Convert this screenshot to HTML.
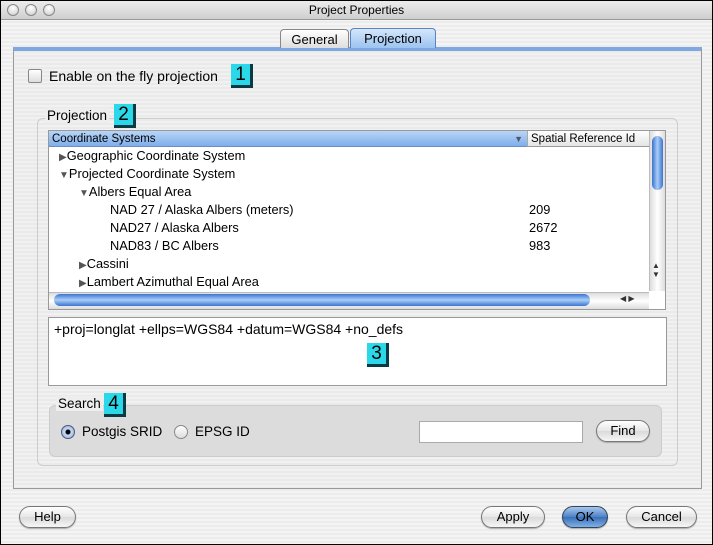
<!DOCTYPE html><html><head><style>
*{box-sizing:border-box}
body{margin:0;width:713px;height:545px;overflow:hidden;font-family:"Liberation Sans",sans-serif;font-size:12.5px;color:#000}
.win{position:absolute;left:0;top:0;width:713px;height:545px;border:1px solid #000;background:repeating-linear-gradient(#ececec 0 2px,#f4f4f4 2px 4px)}
.title{position:absolute;left:0;top:0;width:711px;height:19px;background:linear-gradient(#ececec,#cfcfcf);border-bottom:1px solid #999;text-align:center;font-size:12px;line-height:18px}
.dot{position:absolute;top:3px;width:12px;height:12px;border-radius:50%;border:1px solid #888;background:radial-gradient(circle at 50% 30%,#fff,#ccc)}
.a{position:absolute}
.tab{position:absolute;top:28px;height:19px;border:1px solid #888;border-bottom:none;border-radius:4px 4px 0 0;background:linear-gradient(#fff,#ddd);text-align:center;line-height:19px;font-size:13px}
.panel{position:absolute;left:12px;top:46px;width:689px;height:442px;border:1px solid #999;border-top:4px solid #7fa8e0;background:repeating-linear-gradient(#eaeaea 0 2px,#f1f1f1 2px 4px)}
.badge{position:absolute;width:22px;height:24px;background:#2ad8ea;border-right:3px solid #0a3a44;border-bottom:3px solid #0a3a44;font-size:19px;text-align:center;line-height:22px;transform-origin:0 0}
.grp{position:absolute;border:1px solid #ccc;border-radius:6px}
.btn{position:absolute;height:22px;border:1px solid #777;border-radius:11px;background:linear-gradient(#fff,#e6e6e6 50%,#dadada 51%,#f6f6f6);text-align:center;line-height:20px;font-size:13px;box-shadow:0 1px 1px #aaa}
.row{position:absolute;height:18px;line-height:18px;font-size:12.8px}
</style></head><body><div class="win">
<div class="title">Project Properties</div>
<div class="dot" style="left:6px"></div><div class="dot" style="left:24px"></div><div class="dot" style="left:42px"></div>
<div class="panel"></div>
<div class="tab" style="left:279px;width:69px">General</div>
<div class="tab" style="left:349px;width:86px;background:linear-gradient(#d4e6fb,#9cc3f0);border-color:#5b83c2;top:27px;height:20px">Projection</div>
<div class="a" style="left:27px;top:68px;width:14px;height:14px;border:1px solid #888;border-radius:2px;background:linear-gradient(#fff,#ddd)"></div>
<div class="a" style="left:48px;top:67px;font-size:14px">Enable on the fly projection</div>
<div class="badge" style="left:230px;top:63px">1</div>
<div class="grp" style="left:36px;top:117px;width:641px;height:348px"></div>
<div class="a" style="left:44px;top:107px;padding:0 2px;background:#eee;font-size:13.5px">Projection</div>
<div class="badge" style="left:113px;top:103px">2</div>
<div class="a" style="left:47px;top:129px;width:618px;height:180px;background:#fff;border:1px solid #999"></div>
<div class="a" style="left:48px;top:130px;width:478px;height:16px;background:linear-gradient(#b9d5f6,#7eaeea);border-bottom:1px solid #6a8fc8;font-size:11.5px;line-height:16px;padding-left:3px">Coordinate Systems<span style="position:absolute;right:4px;color:#556;font-size:9px">▼</span></div>
<div class="a" style="left:526px;top:130px;width:122px;height:16px;background:linear-gradient(#fff,#e4e4e4);border-bottom:1px solid #999;border-left:1px solid #aaa;font-size:11.5px;line-height:16px;padding-left:3px">Spatial Reference Id</div>
<div class="a" style="left:648px;top:130px;width:16px;height:160px;background:linear-gradient(90deg,#ddd,#fff,#ddd);border-left:1px solid #bbb"></div>
<div class="a" style="left:651px;top:135px;width:11px;height:54px;border-radius:6px;background:linear-gradient(90deg,#3a74d0,#a9cdf7,#3a74d0)"></div>
<div class="a" style="left:651px;top:260px;font-size:8px;color:#333">▲<br>▼</div>
<div class="row" style="left:58px;top:146px"><span style="font-size:10px;color:#555">▶</span>Geographic Coordinate System</div>
<div class="row" style="left:58px;top:164px"><span style="font-size:10px;color:#555">▼</span>Projected Coordinate System</div>
<div class="row" style="left:78px;top:182px"><span style="font-size:10px;color:#555">▼</span>Albers Equal Area</div>
<div class="row" style="left:109px;top:200px">NAD 27 / Alaska Albers (meters)</div>
<div class="row" style="left:109px;top:218px">NAD27 / Alaska Albers</div>
<div class="row" style="left:109px;top:236px">NAD83 / BC Albers</div>
<div class="row" style="left:528px;top:200px">209</div>
<div class="row" style="left:528px;top:218px">2672</div>
<div class="row" style="left:528px;top:236px">983</div>
<div class="row" style="left:78px;top:254px"><span style="font-size:10px;color:#555">▶</span>Cassini</div>
<div class="row" style="left:78px;top:272px"><span style="font-size:10px;color:#555">▶</span>Lambert Azimuthal Equal Area</div>
<div class="a" style="left:48px;top:291px;width:600px;height:17px;background:linear-gradient(#ddd,#fff,#ddd);border-top:1px solid #bbb"></div>
<div class="a" style="left:53px;top:293px;width:536px;height:12px;border-radius:6px;background:linear-gradient(#3a74d0,#a9cdf7,#3a74d0)"></div>
<div class="a" style="left:619px;top:293px;font-size:8px;color:#333">◀ ▶</div>
<div class="a" style="left:47px;top:316px;width:619px;height:69px;background:#fff;border:1px solid #999;padding:3px 5px;font-size:14px">+proj=longlat +ellps=WGS84 +datum=WGS84 +no_defs</div>
<div class="badge" style="left:366px;top:342px">3</div>
<div class="grp" style="left:48px;top:404px;width:613px;height:52px;background:#dcdcdc"></div>
<div class="a" style="left:55px;top:395px;padding:0 2px;background:#eee;font-size:13.5px">Search</div>
<div class="badge" style="left:103px;top:392px">4</div>
<div class="a" style="left:60px;top:424px;width:14px;height:14px;border-radius:50%;border:1px solid #557;background:radial-gradient(circle,#000 2px,#c8dcf6 3px,#7fa8e0)"></div>
<div class="a" style="left:81px;top:423px;font-size:13.5px">Postgis SRID</div>
<div class="a" style="left:173px;top:424px;width:14px;height:14px;border-radius:50%;border:1px solid #888;background:linear-gradient(#fff,#ddd)"></div>
<div class="a" style="left:194px;top:423px;font-size:13.5px">EPSG ID</div>
<div class="a" style="left:418px;top:420px;width:164px;height:22px;background:#fff;border:1px solid #aaa"></div>
<div class="btn" style="left:595px;top:419px;width:54px">Find</div>
<div class="btn" style="left:18px;top:505px;width:57px">Help</div>
<div class="btn" style="left:480px;top:505px;width:64px">Apply</div>
<div class="btn" style="left:561px;top:505px;width:46px;background:linear-gradient(#a8c8ee,#4d80c4 50%,#3a6fb8 51%,#7fb0e6);border-color:#345">OK</div>
<div class="btn" style="left:625px;top:505px;width:71px">Cancel</div>
</div></body></html>
